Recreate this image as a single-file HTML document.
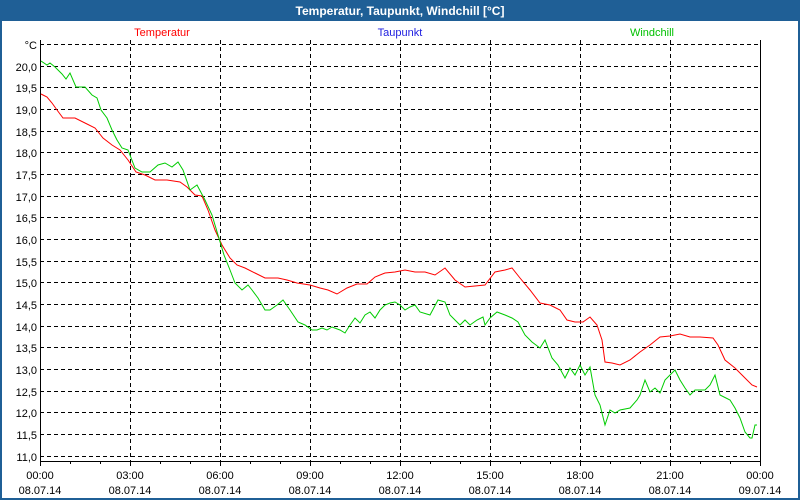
<!DOCTYPE html>
<html><head><meta charset="utf-8"><style>
html,body{margin:0;padding:0;width:800px;height:500px;overflow:hidden;background:#1f5f96;font-family:"Liberation Sans","DejaVu Sans",sans-serif}
</style></head><body>
<svg width="800" height="500" xmlns="http://www.w3.org/2000/svg" style="position:absolute;left:0;top:0" font-family="Liberation Sans, DejaVu Sans, sans-serif">
<rect x="0" y="0" width="800" height="500" fill="#1f5f96"/>
<rect x="2" y="21" width="796" height="477" fill="#fff"/>
<text x="400" y="15" fill="#fff" font-size="12" font-weight="bold" text-anchor="middle">Temperatur, Taupunkt, Windchill [°C]</text>
<text x="162" y="36" fill="#ff0000" font-size="11" text-anchor="middle">Temperatur</text>
<text x="400" y="36" fill="#2020e0" font-size="11" text-anchor="middle">Taupunkt</text>
<text x="652" y="36" fill="#00c000" font-size="11" text-anchor="middle">Windchill</text>
<g stroke="#000" stroke-width="1" stroke-dasharray="4,3" fill="none">
<path d="M40 44.5H760M40 66.5H760M40 87.5H760M40 109.5H760M40 131.5H760M40 152.5H760M40 174.5H760M40 196.5H760M40 217.5H760M40 239.5H760M40 261.5H760M40 282.5H760M40 304.5H760M40 326.5H760M40 347.5H760M40 369.5H760M40 391.5H760M40 412.5H760M40 434.5H760M40 456.5H760"/>
<path d="M130.5 40V461M220.5 40V461M310.5 40V461M400.5 40V461M490.5 40V461M580.5 40V461M670.5 40V461"/>
</g>
<path d="M40.5 40V461.5H760.5V40" stroke="#000" fill="none"/>
<path d="M40.5 461V466M70.5 461V464M100.5 461V464M130.5 461V466M160.5 461V464M190.5 461V464M220.5 461V466M250.5 461V464M280.5 461V464M310.5 461V466M340.5 461V464M370.5 461V464M400.5 461V466M430.5 461V464M460.5 461V464M490.5 461V466M520.5 461V464M550.5 461V464M580.5 461V466M610.5 461V464M640.5 461V464M670.5 461V466M700.5 461V464M730.5 461V464M760.5 461V466" stroke="#000"/>
<g font-size="11" fill="#000" text-anchor="end">
<text x="37" y="49">°C</text><text x="37" y="71">20,0</text><text x="37" y="92">19,5</text><text x="37" y="114">19,0</text><text x="37" y="136">18,5</text><text x="37" y="157">18,0</text><text x="37" y="179">17,5</text><text x="37" y="201">17,0</text><text x="37" y="222">16,5</text><text x="37" y="244">16,0</text><text x="37" y="266">15,5</text><text x="37" y="287">15,0</text><text x="37" y="309">14,5</text><text x="37" y="331">14,0</text><text x="37" y="352">13,5</text><text x="37" y="374">13,0</text><text x="37" y="396">12,5</text><text x="37" y="417">12,0</text><text x="37" y="439">11,5</text><text x="37" y="461">11,0</text>
</g>
<g font-size="11" fill="#000" text-anchor="middle">
<text x="40" y="479">00:00</text><text x="40" y="494">08.07.14</text>
<text x="130" y="479">03:00</text><text x="130" y="494">08.07.14</text>
<text x="220" y="479">06:00</text><text x="220" y="494">08.07.14</text>
<text x="310" y="479">09:00</text><text x="310" y="494">08.07.14</text>
<text x="400" y="479">12:00</text><text x="400" y="494">08.07.14</text>
<text x="490" y="479">15:00</text><text x="490" y="494">08.07.14</text>
<text x="580" y="479">18:00</text><text x="580" y="494">08.07.14</text>
<text x="670" y="479">21:00</text><text x="670" y="494">08.07.14</text>
<text x="760" y="479">00:00</text><text x="760" y="494">09.07.14</text>
</g>
<polyline fill="none" stroke="#ff0000" stroke-width="1" points="41,94 47,97 52,103 57,110 63,118 75,118 87,124 95,128 103,138 112,145 120,150 128,160 136,172 145,175 155,180 167,180 180,182 187,187 195,195 202,196 208,210 215,230 222,245 230,258 237,265 245,268 255,273 265,278 278,278 287,280 297,283 310,285 320,288 328,290 337,294 347,288 357,284 367,284 375,277 385,273 395,272 405,270 415,272 425,272 435,275 445,268 455,280 465,287 475,286 485,285 495,272 505,270 512,268 520,278 530,290 540,303 550,305 560,310 567,320 575,322 583,322 590,317 597,325 602,340 605,362 612,363 620,365 630,360 640,352 650,345 660,337 670,336 680,334 690,337 700,337 713,338 718,345 725,360 735,368 745,378 752,385 757,387"/>
<polyline fill="none" stroke="#00cc00" stroke-width="1" points="41,61 47,65 50,63 55,67 62,74 66,79 70,73 76,87 85,87 92,95 97,98 101,110 107,118 112,130 117,140 122,148 128,150 135,168 142,172 150,172 158,165 165,163 172,167 178,162 183,170 190,190 197,185 205,200 212,215 218,235 224,255 230,270 235,283 242,290 248,285 252,290 258,298 265,310 270,310 277,305 283,300 290,310 298,322 305,325 312,330 317,330 322,328 327,330 332,327 340,330 345,333 350,325 355,318 360,323 365,315 370,312 375,318 380,310 385,305 390,303 395,302 400,305 405,310 410,307 415,305 420,312 430,315 438,300 445,302 450,315 455,320 460,325 465,320 470,325 477,320 483,317 485,325 490,318 497,312 505,315 512,318 518,322 525,335 532,342 540,348 545,340 552,358 558,365 565,378 570,368 575,375 580,365 585,375 590,367 595,395 600,405 605,425 610,410 615,413 620,410 630,408 637,400 640,395 645,380 650,392 655,388 660,393 665,380 670,375 675,370 680,380 685,388 690,395 695,390 705,390 710,385 715,375 720,395 730,400 735,408 740,418 745,432 750,438 752,438 755,425 757,425"/>
</svg>
</body></html>
